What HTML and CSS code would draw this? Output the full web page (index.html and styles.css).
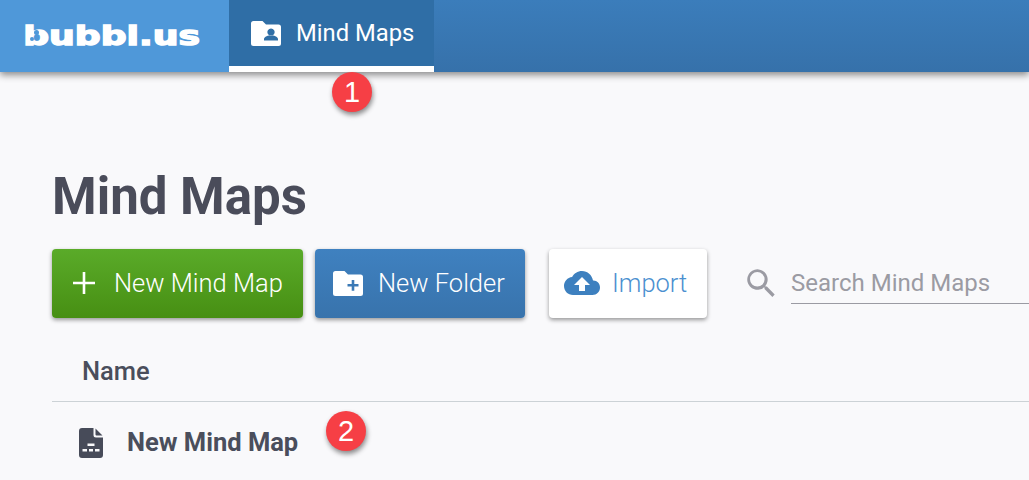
FILE: index.html
```html
<!DOCTYPE html>
<html lang="en">
<head>
<meta charset="utf-8">
<title>Mind Maps</title>
<link rel="stylesheet" href="styles.css">
</head>
<body>
<header class="topbar">
  <a class="logo"><span class="logo-text">bubbl.us</span><span class="logo-hole hole-a"></span><span class="logo-hole hole-b"></span></a>
  <a class="tab">
    <svg class="tab-icon" viewBox="0 0 30 25"><path fill="#fff" fill-rule="evenodd" d="M2.5 0H11.5L15 3.5H27.5A2.5 2.5 0 0 1 30 6V22.5A2.5 2.5 0 0 1 27.5 25H2.5A2.5 2.5 0 0 1 0 22.5V2.5A2.5 2.5 0 0 1 2.5 0ZM20 7.500a3.600 3.600 0 1 0 .01 0ZM13 19.500H27V18C27 15.800 22.500 14.300 20 14.300S13 15.800 13 18Z"/></svg>
    <span>Mind Maps</span>
  </a>
</header>
<main class="content">
  <h1 class="title">Mind Maps</h1>
  <div class="toolbar">
    <button class="btn btn-green">
      <svg class="plus" viewBox="0 0 22 22"><path fill="#fff" d="M9.700 0h2.600v9.700H22v2.600h-9.700V22H9.700v-9.700H0V9.700h9.700Z"/></svg>
      <span>New Mind Map</span>
    </button>
    <button class="btn btn-blue">
      <svg class="folder" viewBox="0 0 30 25"><path fill="#fff" fill-rule="evenodd" d="M2.500 0H11.500L15 3.500H27.500A2.500 2.500 0 0 1 30 6V22.500A2.500 2.500 0 0 1 27.500 25H2.500A2.500 2.500 0 0 1 0 22.500V2.500A2.500 2.500 0 0 1 2.500 0ZM18.700 9V13H14.500V15.500H18.700V19.700H21.300V15.500H25.500V13H21.300V9Z"/></svg>
      <span>New Folder</span>
    </button>
    <button class="btn btn-white">
      <svg class="cloud" viewBox="0 0 36 24"><path fill="#3d80bf" fill-rule="evenodd" d="M29 9.500C28 4 23.500 0 18 0 13.700 0 10 2.400 8.100 6 3.500 6.500 0 10.300 0 15c0 5 4 9 9 9h19.500c4.200 0 7.500-3.400 7.500-7.500 0-4-3-7.200-7-7ZM18 6l8 8h-5v6h-6v-6h-5Z"/></svg>
      <span>Import</span>
    </button>
    <div class="search">
      <svg class="search-icon" viewBox="0 0 28 28"><path fill="#9b9ba3" d="M19.900 17.600h-1.200l-.5-.4a10.200 10.200 0 1 0-1.100 1.100l.4.500v1.200l7.900 7.900 2.300-2.400ZM10.300 17.600a7.300 7.300 0 1 1 0-14.600 7.300 7.300 0 0 1 0 14.600Z"/></svg>
      <div class="search-field">Search Mind Maps</div>
    </div>
  </div>
  <div class="table-head">Name</div>
  <div class="table-row">
    <svg class="doc" viewBox="0 0 24 30"><path fill="#474b59" fill-rule="evenodd" d="M3 0H14.500V7A2.500 2.500 0 0 0 17 9.500H24V27A3 3 0 0 1 21 30H3A3 3 0 0 1 0 27V3A3 3 0 0 1 3 0ZM16.500 .5L23.500 7.500H17.500A1 1 0 0 1 16.500 6.500ZM8.500 15.500V18H15.500V15.500ZM3.500 21V23.500H8V21ZM10 21V23.500H14V21ZM16 21V23.500H20.500V21Z"/></svg>
    <span>New Mind Map</span>
  </div>
</main>
<div class="badge badge-one">1</div>
<div class="badge badge-two">2</div>
</body>
</html>
```

FILE: styles.css
```css
* { box-sizing: border-box; }
html, body { margin: 0; height: 100%; }
body {
  width: 1029px;
  height: 480px;
  overflow: hidden;
  position: relative;
  background: #f9f9fb;
  font-family: Roboto, "Liberation Sans", sans-serif;
  color: #4a4e5c;
}
.topbar {
  display: flex;
  height: 72px;
  background: linear-gradient(#3b7dbb, #3671aa);
  box-shadow: 0 3px 7px rgba(0, 0, 0, .45);
}
.logo {
  position: relative;
  display: flex;
  justify-content: center;
  align-items: center;
  width: 229px;
  background: #4f98d9;
}
.logo-text {
  font-family: "DejaVu Sans", sans-serif;
  font-weight: 700;
  font-size: 26px;
  line-height: 30px;
  color: #fff;
  -webkit-text-stroke: 1.4px #fff;
  transform: translateX(-3px) scaleX(1.39);
}
.logo-hole {
  position: absolute;
  border-radius: 50%;
  background: #4f98d9;
}
.hole-a { left: 34px; top: 30px; width: 5px; height: 5px; }
.hole-b { left: 30px; top: 37px; width: 4px; height: 4px; }
.tab {
  display: flex;
  align-items: center;
  gap: 15px;
  width: 205px;
  padding: 0 0 0 22px;
  background: #2f6ea6;
  border-bottom: 6px solid #fff;
  color: #fff;
  font-size: 23.8px;
}
.tab-icon { width: 30px; height: 25px; }
.content { padding: 0 0 0 52px; }
.title {
  margin: 0;
  padding-top: 95px;
  height: 177px;
  font-size: 51px;
  line-height: 60px;
  font-weight: 700;
  color: #4a4c5a;
}
.toolbar { display: flex; align-items: flex-start; }
.btn {
  display: flex;
  align-items: center;
  height: 69px;
  padding-bottom: 2px;
  border: 0;
  border-radius: 4px;
  font-family: inherit;
  font-size: 25.5px;
  font-weight: 300;
  color: #fff;
  box-shadow: 0 2px 4px rgba(0, 0, 0, .4);
}
.btn-green {
  width: 251px;
  gap: 19px;
  padding-left: 21px;
  padding-right: 0;
  background: linear-gradient(#5aab29, #478f13);
}
.btn-blue {
  width: 210px;
  margin-left: 12px;
  gap: 15px;
  padding-left: 18px;
  padding-right: 0;
  background: linear-gradient(#3f81c0, #3873ac);
}
.btn-white {
  width: 158px;
  margin-left: 24px;
  gap: 12px;
  padding-left: 15px;
  padding-right: 0;
  background: #fff;
  color: #4b90d0;
}
.plus { width: 22px; height: 22px; }
.folder { width: 30px; height: 25px; }
.cloud { width: 36px; height: 24px; }
.search {
  display: flex;
  flex: 1;
  margin-left: 40px;
  min-width: 0;
}
.search-icon { width: 28px; height: 28px; margin-top: 20px; }
.search-field {
  flex: 1;
  height: 55px;
  margin-left: 16px;
  padding-top: 18px;
  border-bottom: 1px solid #9b9ba3;
  font-size: 24px;
  line-height: 32px;
  color: #9b9ba3;
}
.table-head {
  height: 84px;
  padding: 37px 0 0 30px;
  border-bottom: 1px solid #ccd2d6;
  font-size: 25.5px;
  line-height: 32px;
  font-weight: 500;
}
.table-row {
  display: flex;
  align-items: center;
  gap: 24px;
  padding: 24px 0 0 27px;
  font-size: 25.5px;
  line-height: 32px;
  font-weight: 700;
}
.doc { width: 24px; height: 30px; margin-top: 2px; }
.badge {
  position: absolute;
  display: flex;
  justify-content: center;
  align-items: center;
  width: 40px;
  height: 40px;
  border-radius: 50%;
  background: #f63f45;
  color: #fff;
  font-family: "Liberation Sans", Arial, sans-serif;
  font-size: 29px;
  box-shadow: 1px 3px 5px rgba(0, 0, 0, .45);
}
.badge-one { left: 332px; top: 72px; }
.badge-two { left: 326px; top: 411px; }
```
